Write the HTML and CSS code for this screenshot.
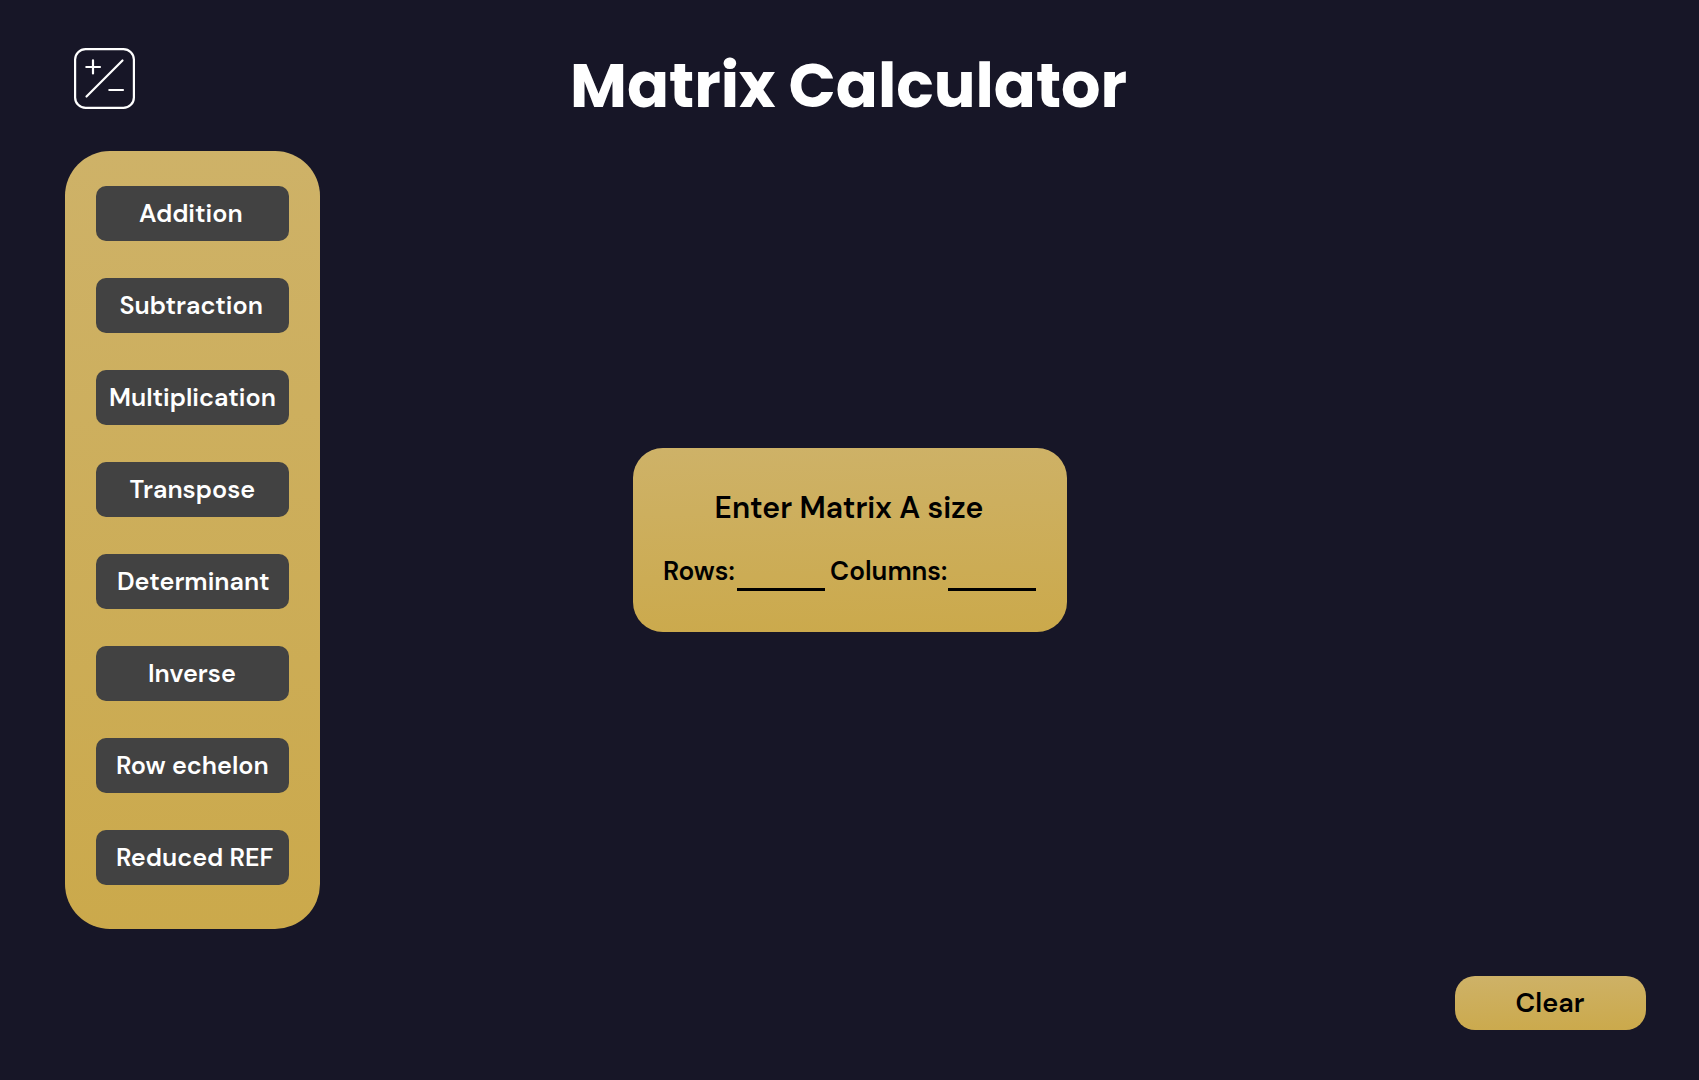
FILE: index.html
```html
<!DOCTYPE html>
<html lang="en">
<head>
<meta charset="utf-8">
<title>Matrix Calculator</title>
<link rel="stylesheet" href="styles.css">
</head>
<body>
<div class="page">
  <header class="header">
    <svg class="logo" viewBox="0 0 61 61" fill="none" stroke="#fff" stroke-width="2.2" stroke-linecap="round" aria-hidden="true">
      <rect x="1.1" y="1.1" width="58.8" height="58.8" rx="10.5"/>
      <path d="M12.3 19H26M19 12.3V25.5M35.3 42H49M12.5 48.5L48.5 12.5"/>
    </svg>
    <h1 class="title">Matrix Calculator</h1>
  </header>
  <main class="main">
    <nav class="sidebar">
      <button class="op op-addition">Addition</button>
      <button class="op op-subtraction">Subtraction</button>
      <button class="op op-multiplication">Multiplication</button>
      <button class="op op-transpose">Transpose</button>
      <button class="op op-determinant">Determinant</button>
      <button class="op op-inverse">Inverse</button>
      <button class="op op-echelon">Row echelon</button>
      <button class="op op-echelon">Reduced REF</button>
    </nav>
    <section class="card">
      <h2 class="card-title">Enter Matrix A size</h2>
      <div class="fields">
        <label class="label label-rows" for="rows">Rows:</label>
        <input class="field field-rows" id="rows">
        <label class="label label-columns" for="columns">Columns:</label>
        <input class="field" id="columns">
      </div>
    </section>
  </main>
  <footer class="footer">
    <button class="clear">Clear</button>
  </footer>
</div>
</body>
</html>
```
FILE: styles.css
```css
* { box-sizing: border-box; }

body {
  margin: 0;
  background: #171627;
  color: #000;
  font-family: "DM Sans", Inter, sans-serif;
  font-weight: 600;
}

button, input { border: 0; font: inherit; }

.page {
  display: flex;
  flex-direction: column;
  width: 1699px;
  height: 1080px;
  overflow: hidden;
}

.header {
  display: flex;
  align-items: flex-start;
  height: 151px;
  padding: 48px 0 0 74px;
}

.logo { width: 61px; height: 61px; flex: none; }

.title {
  margin: -9px 0 0 435px;
  color: #fff;
  font: 700 62px/93px Poppins, Inter, sans-serif;
  white-space: nowrap;
}

.main {
  display: flex;
  align-items: flex-start;
  height: 778px;
  padding-left: 65px;
}

.sidebar,
.card,
.clear {
  background: linear-gradient(178deg, #ceb268, #cba94b);
}

.sidebar {
  display: flex;
  flex-direction: column;
  gap: 37px;
  width: 255px;
  height: 778px;
  padding: 35px 31px 0;
  border-radius: 45px;
}

.op {
  height: 55px;
  padding: 0;
  border-radius: 10px;
  background: #424242;
  color: #fff;
  font-size: 25.15px;
  line-height: 55px;
  text-align: left;
  white-space: nowrap;
}

.op-addition { padding-left: 43px; }
.op-subtraction { padding-left: 23.5px; }
.op-multiplication { padding-left: 13px; }
.op-transpose { padding-left: 33.5px; }
.op-determinant { padding-left: 21px; }
.op-inverse { padding-left: 52px; }
.op-echelon { padding-left: 20px; }

.card {
  width: 434px;
  height: 184px;
  margin: 297px 0 0 313px;
  padding: 40px 0 0 30px;
  border-radius: 30px;
}

.card-title {
  margin: 0 0 0 51.5px;
  font-size: 30.1px;
  font-weight: 600;
  line-height: 40px;
}

.fields {
  display: flex;
  align-items: flex-end;
  height: 63px;
}

.label {
  height: 40px;
  font-size: 26.15px;
  line-height: 40px;
  white-space: nowrap;
}

.label-rows { width: 74px; }
.label-columns { width: 118px; }

.field {
  width: 88px;
  height: 40px;
  padding: 0;
  border-bottom: 3px solid #000;
  background: transparent;
  outline: 0;
}

.field-rows { margin-right: 5px; }

.footer {
  display: flex;
  justify-content: flex-end;
  padding: 47px 53px 0 0;
}

.clear {
  width: 191px;
  height: 54px;
  padding: 0 1px 0 0;
  border-radius: 20px;
  color: #000;
  font-size: 27px;
  line-height: 54px;
}
```
